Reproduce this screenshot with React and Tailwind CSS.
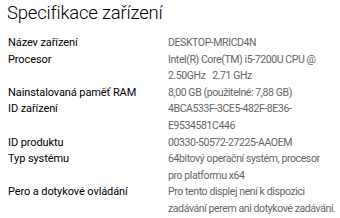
import React from "react";

const specs = [
  { label: "Název zařízení", value: ["DESKTOP-MRICD4N"] },
  { label: "Procesor", value: ["Intel(R) Core(TM) i5-7200U CPU @", "2.50GHz   2.71 GHz"] },
  { label: "Nainstalovaná paměť RAM", value: ["8,00 GB (použitelné: 7,88 GB)"] },
  { label: "ID zařízení", value: ["4BCA533F-3CE5-482F-8E36-", "E9534581C446"] },
  { label: "ID produktu", value: ["00330-50572-27225-AAOEM"] },
  { label: "Typ systému", value: ["64bitový operační systém, procesor", "pro platformu x64"] },
  {
    label: "Pero a dotykové ovládání",
    value: ["Pro tento displej není k dispozici", "zadávání perem ani dotykové zadávání."],
  },
];

const App = () => {
  return (
    <div className="w-[340px] h-[218px] overflow-hidden bg-white font-['Roboto',sans-serif]">
      <h1 className="pl-[7px] pt-[1px] text-[18.5px] leading-[24px] font-light text-black tracking-[-0.2px]">
        Specifikace zařízení
      </h1>
      <div className="mt-[10px] grid grid-cols-[160px_1fr] pl-2 leading-[16.6px]">
        {specs.map((row) => (
          <React.Fragment key={row.label}>
            <div className="text-[11px] text-black whitespace-nowrap tracking-[-0.1px]">{row.label}</div>
            <div className="text-[10.5px] text-[#666] whitespace-pre tracking-[-0.4px]">
              {row.value.map((line, i) => (
                <div key={i}>{line}</div>
              ))}
            </div>
          </React.Fragment>
        ))}
      </div>
    </div>
  );
};

export default App;
